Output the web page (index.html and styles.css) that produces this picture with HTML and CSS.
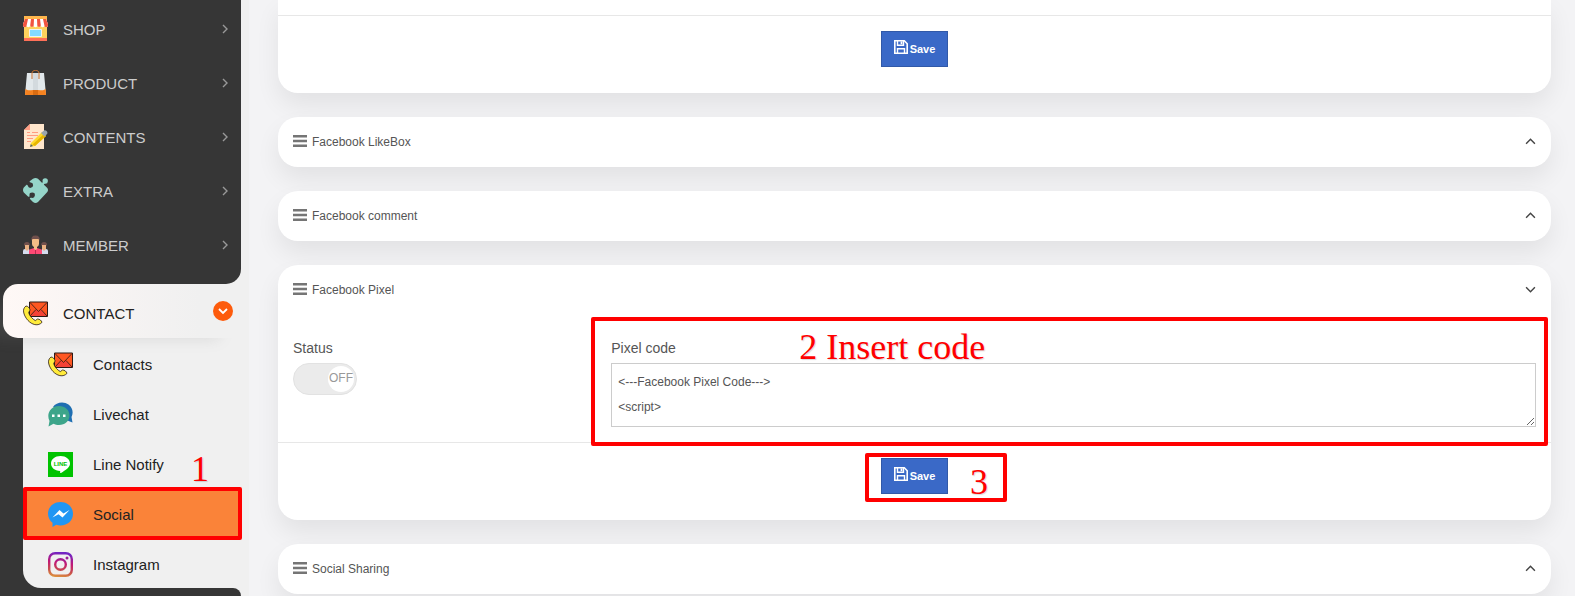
FILE: index.html
```
<!DOCTYPE html>
<html lang="en">
<head>
    <meta charset="UTF-8">
    <meta name="viewport" content="width=device-width, initial-scale=1.0">
    <title>Social settings</title>
    <link rel="stylesheet" href="styles.css">
</head>
<body>
    <!-- shared icons -->
    <svg class="sprite" aria-hidden="true">
        <symbol id="i-right" viewBox="0 0 10 10"><path d="M3 1l4 4-4 4" fill="none" stroke="currentColor" stroke-width="1.4"/></symbol>
        <symbol id="i-down" viewBox="0 0 10 10"><path d="M1 3l4 4 4-4" fill="none" stroke="currentColor" stroke-width="1.3"/></symbol>
        <symbol id="i-up" viewBox="0 0 10 10"><path d="M1 7l4-4 4 4" fill="none" stroke="currentColor" stroke-width="1.3"/></symbol>
        <symbol id="i-bars" viewBox="0 0 14 12"><path d="M0 0h14v2.500H0zM0 4.700h14v2.500H0zM0 9.500h14V12H0z" fill="currentColor"/></symbol>
        <symbol id="i-save" viewBox="0 0 14 14">
            <path d="M.8.8h9.500l2.900 3v9.400H.8z" fill="none" stroke="currentColor" stroke-width="1.6"/>
            <path d="M3.500 1v4.200h6V1M3.500 13V8.700h7V13" fill="none" stroke="currentColor" stroke-width="1.4"/>
            <path d="M6.600 1.400h1.800v2.800H6.600z" fill="currentColor"/>
        </symbol>
        <symbol id="i-contact" viewBox="0 0 25 25">
            <path d="M6.500 1h18v14.500h-18z" fill="#ff5722" stroke="#2b1a17"/>
            <path d="M7 15l6-6.500 2.500 2 2.500-2 6 6.500z" fill="#f44336"/>
            <path d="M7 1.500l8.500 9 8.500-9M7 15l6-6.500M24 15l-6-6.500" fill="none" stroke="#2b1a17" stroke-width=".8"/>
            <path d="M3 5C.8 6.500 0 9 .8 12c1.500 5.500 6 10.500 11 11.600 3 .6 5.500-.3 7.200-2.300-.5-1.800-2.500-3.300-4.500-3.300l-2.200 1.600C9.500 18 6.500 15 5.600 11.500L7.200 9C6.500 7 5 5 3 5z" fill="#ffeb3b" stroke="#2b1a17" stroke-width=".8"/>
        </symbol>
    </svg>

    <div class="page">
        <nav class="sidebar">
            <ul class="menu">
                <li><a class="menu-link" href="#">
                    <svg class="icon" viewBox="0 0 25 25"><path d="M1 0h23v25H1z" fill="#ffd15c"/><path d="M1 0h23v4H1z" fill="#ffb64c"/><path d="M1 22h23v3H1z" fill="#ff7058"/><path d="M2 3h21l2 5v1.500a1.800 1.800 0 0 1-3.600 0 1.800 1.800 0 0 1-3.600 0 1.800 1.800 0 0 1-3.500 0 1.800 1.800 0 0 1-3.600 0 1.800 1.800 0 0 1-3.500 0 1.800 1.800 0 0 1-3.600 0 1.800 1.800 0 0 1-3.600 0V8z" fill="#fff"/><path d="M2 3h3L3.600 9.500a1.800 1.800 0 0 1-3.600 0V8zM8 3h3l-.3 6.500a1.800 1.800 0 0 1-3.500 0zM14 3h3l.8 6.500a1.800 1.800 0 0 1-3.500 0zM20 3h3l2 5v1.500a1.800 1.800 0 0 1-3.600 0z" fill="#f1543f"/><path d="M6.500 13.500h12v7h-12z" fill="#84dbff" stroke="#f2f2f2"/></svg>
                    SHOP<svg class="arrow"><use href="#i-right"/></svg></a></li>
                <li><a class="menu-link" href="#">
                    <svg class="icon" viewBox="0 0 25 25"><path d="M4 3h17l2 22H2z" fill="#e2e8eb"/><path d="M10 3h5v18h-5z" fill="#d3dade"/><path d="M2.300 19c3 2 5 1 7.700 1h5c3 0 5 1 7.700-1l.3 6H2z" fill="#f58220"/><path d="M10 20h5v5h-5z" fill="#d96c12"/><path d="M9 9V3c0-3.500 7-3.500 7 0v6" fill="none" stroke="#c9712e"/></svg>
                    PRODUCT<svg class="arrow"><use href="#i-right"/></svg></a></li>
                <li><a class="menu-link" href="#">
                    <svg class="icon" viewBox="0 0 25 25"><path d="M7 0h14v25H1V6z" fill="#ffe6cc"/><path d="M7 0v6H1z" fill="#ff9e84"/><path d="M9 8.500h6M4 8.500h3M4 11.500h11M4 14.500h6M4 17.500h4" stroke="#ff9b80"/><path d="M8 19L19 8l4 4-11 10-5 1z" fill="#ffda2d"/><path d="M9.500 20.500L21 10l2 2-11 10z" fill="#e8b600"/><path d="M18 9l3-2.500c2-1 4.500 2 3 3.500l-2.500 2.500z" fill="#9aa5ad"/><path d="M7 23l.8-3 2.200 2z" fill="#55606e"/></svg>
                    CONTENTS<svg class="arrow"><use href="#i-right"/></svg></a></li>
                <li><a class="menu-link" href="#">
                    <svg class="icon" viewBox="0 0 25 25"><path d="M10 .8Q12.500-.8 15 .8l3.700 3.700c1 .6 1.200-.5.8-1.500a2.700 2.700 0 1 1 2.500 2.700c-1 0-1.500.5-.8 1.300L24.300 10q1.400 2 0 4L15 24q-2.500 2-5 0l-3-3c-.5-1 .2-1.500 1.500-1.200a2.700 2.700 0 1 0-2-2.300c.2 1.300-.6 1.600-1.500 1L.8 14.500q-1.600-2.500 0-5L3.300 7c.8-.5 1.300 0 1.500.8a2.700 2.700 0 1 0 3-3.300C6.500 4.200 6.300 3.700 7 3z" fill="#95d5c9"/></svg>
                    EXTRA<svg class="arrow"><use href="#i-right"/></svg></a></li>
                <li><a class="menu-link" href="#">
                    <svg class="icon" viewBox="0 0 25 25"><path d="M0 22v-3q0-2 2-2h4l2 5zM25 22v-3q0-2-2-2h-4l-2 5z" fill="#d5dcee"/><path d="M2 11h4v6l-2 2-2-2zM19 11h4v6l-2 2-2-2z" fill="#eab182"/><path d="M1 14q-.5-4 3-4 3 0 3 4l-1-1H2zM24 14q.5-4-3-4-3 0-3 4l1-1h4z" fill="#70504c"/><path d="M6 22v-3q0-2 2-2l3-1h3l3 1q2 0 2 2v3z" fill="#ff4975"/><path d="M12.500 18v4" stroke="#b92d50"/><path d="M9 6h7v6q0 2-2 3v2l-1.500 1L11 17v-2q-2-1-2-3z" fill="#f4bd86"/><path d="M8.500 9q-1-5.500 4-5.500t4 5.500l-1-2h-6z" fill="#70504c"/></svg>
                    MEMBER<svg class="arrow"><use href="#i-right"/></svg></a></li>
            </ul>

            <div class="group">
                <a class="menu-link group-link" href="#">
                    <svg class="icon"><use href="#i-contact"/></svg>
                    CONTACT
                    <span class="group-toggle"><svg viewBox="0 0 10 10"><path d="M1 3l4 4 4-4" fill="none" stroke="#fff" stroke-width="1.800"/></svg></span>
                </a>
                <ul class="submenu">
                    <li><a class="sub-link" href="#"><svg class="icon"><use href="#i-contact"/></svg>Contacts</a></li>
                    <li><a class="sub-link" href="#">
                        <svg class="icon" viewBox="0 0 25 25"><path d="M5 5C8 0 16-1 20.500 2.500 25 6 25.500 11 23.500 15l1 5.500-4-1.500z" fill="#1f6fb2"/><path d="M11 4C17 4 21.500 8 21.500 13.500S17 23 11 23c-2 0-4-.4-5.500-1.200L.5 24.500l1-5.500C-2 12 2.500 4 11 4z" fill="#3da58a"/><path d="M4 12.500h2.500V15H4zM9.500 12.500H12V15H9.500zM15 12.500h2.500V15H15z" fill="#fff"/></svg>
                        Livechat</a></li>
                    <li><a class="sub-link" href="#">
                        <svg class="icon" viewBox="0 0 25 25"><path d="M0 0h25v25H0z" fill="#00c300"/><path d="M12.500 4C18 4 22 7.300 22 11.500c0 4-4.500 6.500-9 9.500-.8.400-1-.2-.8-2C6.500 18.800 3 15.500 3 11.500 3 7.300 7 4 12.500 4z" fill="#fff"/><text class="line-mark" x="12.500" y="13.500" text-anchor="middle">LINE</text></svg>
                        Line Notify</a></li>
                    <li class="active">
                        <a class="sub-link" href="#">
                        <svg class="icon" viewBox="0 0 25 25"><path d="M12.500 0C19.500 0 25 5 25 11.800S19.500 23.500 12.500 23.500c-1.500 0-3-.2-4.300-.7L4.500 25v-4.200C1.700 18.600 0 15.400 0 11.800 0 5 5.500 0 12.500 0z" fill="#2196f3"/><path d="M4.500 15.500l7-7.500 4 3.500 6-3.500-7 7.500-4-3.300z" fill="#fff"/></svg>
                        Social</a>
                        <span class="mark mark-social"></span>
                        <span class="note note-one">1</span>
                    </li>
                    <li><a class="sub-link" href="#">
                        <svg class="icon" viewBox="0 0 25 25"><defs><linearGradient id="insta" gradientUnits="userSpaceOnUse" x1="4" y1="25" x2="8" y2="0"><stop offset="0" stop-color="#e09b3d"/><stop offset=".3" stop-color="#c74c4d"/><stop offset=".6" stop-color="#c21975"/><stop offset="1" stop-color="#7024c4"/></linearGradient></defs><rect x="1.200" y="1.200" width="22.600" height="22.600" rx="6" fill="none" stroke="url(#insta)" stroke-width="2.400"/><circle cx="12.500" cy="12.500" r="5.300" fill="none" stroke="url(#insta)" stroke-width="2.400"/><circle cx="19" cy="6" r="1.500" fill="#9b2199"/></svg>
                        Instagram</a></li>
                </ul>
            </div>
            <div class="menu-rest"></div>
        </nav>

        <main class="content">
            <section class="panel">
                <div class="panel-top"></div>
                <div class="panel-footer">
                    <button class="save-btn" type="button"><svg><use href="#i-save"/></svg>Save</button>
                </div>
            </section>

            <section class="panel">
                <button class="panel-header" type="button"><svg class="bars"><use href="#i-bars"/></svg>Facebook LikeBox<svg class="chevron"><use href="#i-up"/></svg></button>
            </section>

            <section class="panel">
                <button class="panel-header" type="button"><svg class="bars"><use href="#i-bars"/></svg>Facebook comment<svg class="chevron"><use href="#i-up"/></svg></button>
            </section>

            <section class="panel">
                <button class="panel-header" type="button"><svg class="bars"><use href="#i-bars"/></svg>Facebook Pixel<svg class="chevron"><use href="#i-down"/></svg></button>
                <div class="panel-body">
                    <div class="col col-status">
                        <label class="field-label" for="status">Status</label>
                        <label class="switch">
                            <input type="checkbox" id="status">
                            <span class="knob">OFF</span>
                        </label>
                    </div>
                    <div class="col col-code">
                        <label class="field-label" for="pixelCode">Pixel code</label>
                        <textarea class="code-input" id="pixelCode" spellcheck="false">&lt;---Facebook Pixel Code---&gt;
&lt;script&gt;</textarea>
                        <span class="mark mark-code"></span>
                        <span class="note note-two">2 Insert code</span>
                    </div>
                </div>
                <div class="panel-footer">
                    <div class="save-wrap">
                        <button class="save-btn" type="button"><svg><use href="#i-save"/></svg>Save</button>
                        <span class="mark mark-save"></span>
                        <span class="note note-three">3</span>
                    </div>
                </div>
            </section>

            <section class="panel">
                <button class="panel-header" type="button"><svg class="bars"><use href="#i-bars"/></svg>Social Sharing<svg class="chevron"><use href="#i-up"/></svg></button>
            </section>
        </main>
    </div>
</body>
</html>
```

FILE: styles.css
```
* {
    box-sizing: border-box;
}

body {
    margin: 0;
    font-family: "Liberation Sans", Arial, sans-serif;
    font-size: 12px;
    color: #555;
    background-color: #f3f3f5;
}

ul {
    list-style: none;
    margin: 0;
    padding: 0;
}

a {
    text-decoration: none;
}

.sprite {
    display: none;
}

.page {
    display: flex;
    min-height: 100vh;
}

/* sidebar */
.sidebar {
    display: flex;
    flex-direction: column;
    flex: none;
    width: 249px;
    background-color: #f0f0f0;
    font-size: 15px;
}

.menu {
    margin-right: 8px;
    padding: 2px 0 12px;
    background-color: #363636;
    border-radius: 0 0 15px 0;
}

.menu-link {
    display: flex;
    align-items: center;
    gap: 15px;
    height: 54px;
    padding: 0 11px 0 23px;
    color: #ccc;
    font-size: 15px;
}

.icon {
    flex: none;
    width: 25px;
    height: 25px;
}

.menu .icon {
    margin-bottom: 2px;
}

.arrow {
    width: 10px;
    height: 10px;
    margin-left: auto;
    color: #999;
}

.group {
    background: linear-gradient(#363636, #363636) 0 0 / 45px 100% no-repeat;
}

.group-link {
    position: relative;
    margin-left: 3px;
    padding: 4px 16px 0 20px;
    color: #222;
    background: linear-gradient(to right, #fff8f6, #f0f0f0 80%);
    border-radius: 15px 0 0 15px;
    box-shadow: -20px 10px 15px -10px rgba(120, 120, 120, 0.2);
}

.group-toggle {
    display: flex;
    justify-content: center;
    align-items: center;
    width: 20px;
    height: 20px;
    margin: 0 0 4px auto;
    border-radius: 50%;
    background-color: #fd5b0c;
}

.group-toggle svg {
    width: 10px;
    height: 10px;
}

.submenu {
    margin-left: 23px;
    background-color: #f0f0f0;
    border-radius: 0 0 0 18px;
}

.submenu li {
    margin-right: 8px;
}

.sub-link {
    display: flex;
    align-items: center;
    gap: 20px;
    height: 50px;
    padding: 2px 0 0 25px;
    color: #222;
}

.submenu .active {
    position: relative;
    background-color: #fa8339;
}

.line-mark {
    font-size: 6px;
    font-weight: bold;
    fill: #00c300;
}

.menu-rest {
    flex: 1;
    min-height: 8px;
    margin-right: 8px;
    background-color: #363636;
    border-radius: 0 8px 0 0;
}

/* panels */
.content {
    display: flex;
    flex-direction: column;
    gap: 24px;
    flex: 1;
    min-width: 0;
    padding: 0 24px 0 29px;
}

.panel {
    background-color: #fff;
    border-radius: 20px;
    box-shadow: 0 12px 24px rgba(0, 0, 0, 0.07);
}

.panel:first-child {
    border-radius: 0 0 20px 20px;
}

.panel-top {
    height: 15px;
}

.panel-header {
    display: flex;
    align-items: center;
    gap: 5px;
    width: 100%;
    height: 50px;
    padding: 0 15px;
    border: none;
    background: none;
    color: #555;
    font-family: inherit;
    font-size: 12px;
    cursor: pointer;
}

.bars {
    width: 14px;
    height: 12px;
    margin-bottom: 2px;
    color: #757575;
}

.chevron {
    width: 11px;
    height: 11px;
    margin: 0 0 2px auto;
    color: #444;
}

.panel-body {
    display: flex;
    padding: 20px 0 15px;
}

.col {
    position: relative;
    display: flex;
    flex-direction: column;
    align-items: flex-start;
    gap: 2px;
    padding: 0 15px;
}

.col-status {
    width: 25%;
}

.col-code {
    width: 75%;
}

.field-label {
    font-size: 14px;
    line-height: 26px;
}

.switch {
    display: flex;
    justify-content: flex-end;
    align-items: center;
    width: 64px;
    height: 32px;
    padding: 0 2px;
    border: 1px solid #e2e2e2;
    border-radius: 16px;
    background-color: #ebebeb;
    cursor: pointer;
}

.switch input {
    position: absolute;
    opacity: 0;
}

.knob {
    width: 26px;
    height: 26px;
    border-radius: 50%;
    background-color: #fff;
    color: #999;
    font-size: 12px;
    line-height: 24px;
    text-align: center;
}

.code-input {
    width: 100%;
    height: 64px;
    padding: 6px;
    border: 1px solid #ccc;
    background-color: #fff;
    color: #555;
    font-family: inherit;
    font-size: 12px;
    line-height: 25px;
    resize: vertical;
    overflow: hidden;
}

.panel-footer {
    display: flex;
    justify-content: center;
    padding: 15px 0 26px;
    border-top: 1px solid #e7e7e7;
}

.save-wrap {
    position: relative;
}

.save-btn {
    display: flex;
    justify-content: center;
    align-items: center;
    gap: 2px;
    width: 67px;
    height: 36px;
    padding: 0;
    border: 1px solid #3159a8;
    background-color: #3a69c7;
    color: #fff;
    font-family: inherit;
    font-size: 11px;
    font-weight: bold;
    cursor: pointer;
}

.save-btn svg {
    width: 14px;
    height: 14px;
    margin-bottom: 4px;
}

/* step marks */
.mark {
    position: absolute;
    border: 4px solid #f00;
    border-radius: 2px;
    pointer-events: none;
}

.mark-social {
    inset: -1px -1px -2px 0;
}

.mark-code {
    inset: -18px 3px -19px -5px;
}

.mark-save {
    inset: -5px -59px -8px -16px;
}

.note {
    position: absolute;
    color: #f00;
    font-family: "Liberation Serif", "Times New Roman", serif;
    font-size: 36px;
    line-height: 40px;
    white-space: nowrap;
    text-shadow: 1px 1px 1px rgba(0, 0, 0, 0.15);
    pointer-events: none;
}

.note-one {
    top: -39px;
    left: 168px;
}

.note-two {
    top: -8px;
    left: 203px;
}

.note-three {
    top: 4px;
    left: 89px;
}
```
